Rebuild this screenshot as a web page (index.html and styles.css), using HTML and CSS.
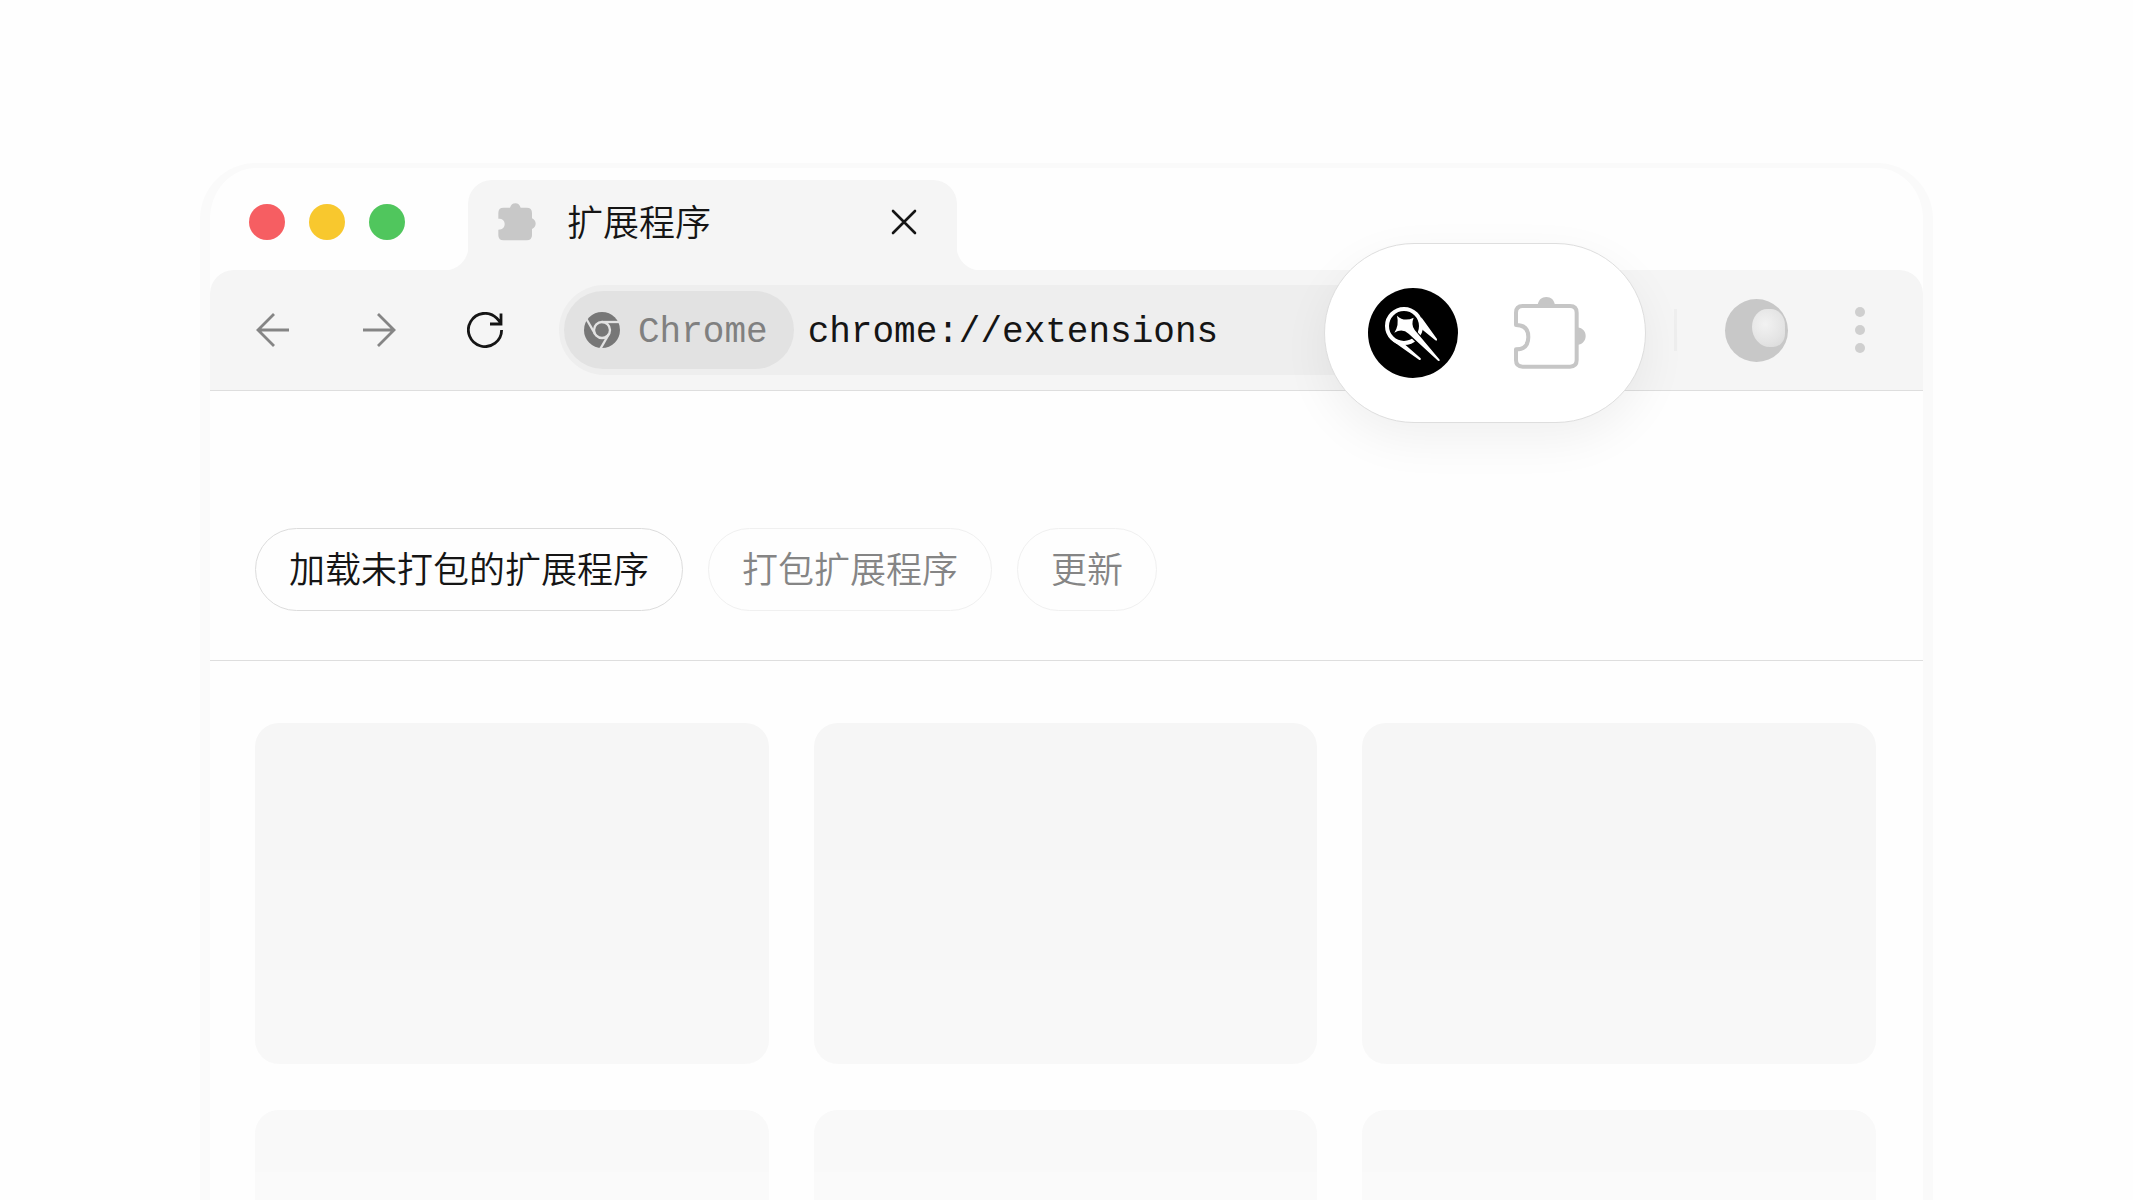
FILE: index.html
```html
<!DOCTYPE html>
<html lang="zh-CN">
<head>
  <meta charset="UTF-8" />
  <title>扩展程序</title>
  <meta name="viewport" content="width=device-width, initial-scale=1.0" />
  <link rel="stylesheet" href="styles.css">
</head>
<body>

  <div class="browser">
    <!-- Title bar -->
    <header class="titlebar">
      <div class="lights">
        <span class="light red"></span>
        <span class="light yellow"></span>
        <span class="light green"></span>
      </div>
      <div class="tab">
        <svg class="tab-icon" viewBox="0 0 114 112" aria-hidden="true">
          <path fill="#c8c8c8" d="M16 13H36C39 4 44 0 52 0S65 4 68 13H86Q102 13 102 29V45Q113 51 113 61T102 77V96Q102 111 86 111H16Q1 111 1 96V79C14 79 20 72 20 62S14 46 1 46V29Q1 13 16 13Z"/>
        </svg>
        <span class="tab-title">扩展程序</span>
        <button class="tab-close" aria-label="关闭">
          <svg viewBox="0 0 26 26" fill="none" stroke="#151515" stroke-width="2.6" stroke-linecap="round"><path d="M2 2L24 24M24 2L2 24"/></svg>
        </button>
      </div>
    </header>

    <!-- Toolbar -->
    <nav class="toolbar">
      <div class="nav-buttons">
        <button aria-label="后退">
          <svg viewBox="0 0 36 36" fill="none" stroke="#858585" stroke-width="2.8"><path d="M34 18H3M19 2L3 18L19 34"/></svg>
        </button>
        <button aria-label="前进">
          <svg viewBox="0 0 36 36" fill="none" stroke="#858585" stroke-width="2.8"><path d="M2 18H33M17 2L33 18L17 34"/></svg>
        </button>
        <button aria-label="重新加载">
          <svg viewBox="0 0 36 36" fill="none" stroke="#151515" stroke-width="2.8"><path d="M34.6 18A16.6 16.6 0 1 1 29.8 6.3L34 11M34 1.5V12H23"/></svg>
        </button>
      </div>

      <div class="address">
        <span class="chip">
          <svg viewBox="0 0 108 108" aria-hidden="true">
            <circle cx="54" cy="54" r="54" fill="#777"/>
            <g stroke="#e2e2e2" stroke-width="7" fill="none">
              <circle cx="54" cy="54" r="24"/>
              <path d="M54 30H106"/>
              <path d="M54 30H106" transform="rotate(120 54 54)"/>
              <path d="M54 30H106" transform="rotate(240 54 54)"/>
            </g>
          </svg>
          <span class="chip-label">Chrome</span>
        </span>
        <input type="text" value="chrome://extensions" aria-label="地址栏">
      </div>

      <span class="divider"></span>
      <button class="avatar" aria-label="个人资料"></button>
      <button class="menu" aria-label="菜单"><i></i><i></i><i></i></button>

      <!-- Enlarged extension buttons -->
      <div class="spotlight">
        <button class="comet" aria-label="扩展">
          <svg viewBox="0 0 270 270">
            <circle cx="135" cy="135" r="135" fill="#000"/>
            <circle cx="108" cy="114" r="51" fill="none" stroke="#fff" stroke-width="12"/>
            <path fill="#fff" d="M160 88L207 153Q208 160 202 157L156 119ZM66 151Q72 158 82 165L154 216Q161 217 158 211L110 169L92 160Z"/>
            <path fill="#000" d="M134 116L165 150L152 172L114 134Z"/>
            <path fill="#fff" d="M87 83Q108 103 137 89Q128 110 140 126L215 215Q216 221 210 218L122 137Q103 120 79 134Q94 111 87 83Z"/>
          </svg>
        </button>
        <button class="puzzle" aria-label="扩展程序">
          <svg viewBox="0 0 216 216">
            <path fill="none" stroke="#c6c6c6" stroke-width="12" stroke-linejoin="round" d="M6 84V47Q6 27 26 27H168Q188 27 188 47V189Q188 209 168 209H26Q6 209 6 189V157C30 157 43 145 43 120S30 84 6 84Z"/>
            <path fill="#c6c6c6" d="M71 25C73 8 83 0 97 0S121 8 123 25ZM190 91C207 93 215 104 215 117S207 142 190 144Z"/>
          </svg>
        </button>
      </div>
    </nav>

    <!-- Page -->
    <main>
      <div class="actions">
        <button class="primary">加载未打包的扩展程序</button>
        <button>打包扩展程序</button>
        <button>更新</button>
      </div>
      <div class="cards">
        <div class="card"></div>
        <div class="card"></div>
        <div class="card"></div>
        <div class="card"></div>
        <div class="card"></div>
        <div class="card"></div>
      </div>
    </main>
  </div>

</body>
</html>
```
FILE: styles.css
```css
* {
  box-sizing: border-box;
}

body {
  margin: 0;
  height: 100vh;
  padding: 163px 200px 0;
  overflow: hidden;
  background: #fefefe;
  color: #151515;
  font-family: "Noto Sans CJK SC", sans-serif;
  font-size: 36px;
  font-weight: 350;
}

button {
  padding: 0;
  border: 0;
  background: none;
  color: inherit;
  font: inherit;
  cursor: pointer;
}

svg {
  display: block;
}

.browser {
  border: 10px solid #fafafa;
  border-top-width: 5px;
  border-bottom: 0;
  border-radius: 56px 56px 0 0;
  background: #fefefe;
}

/* Title bar */
.titlebar {
  display: flex;
  align-items: flex-end;
  height: 102px;
  padding-left: 39px;
}

.lights {
  display: flex;
  gap: 24px;
  margin-right: 63px;
  padding-bottom: 30px;
}

.light {
  width: 36px;
  height: 36px;
  border-radius: 50%;
}

.red { background: #f65e62; }
.yellow { background: #f8c82e; }
.green { background: #50c65d; }

.tab {
  position: relative;
  display: flex;
  align-items: center;
  width: 489px;
  height: 90px;
  padding: 0 40px 6px 30px;
  border-radius: 24px 24px 0 0;
  background: #f5f5f5;
}

.tab::before,
.tab::after {
  content: "";
  position: absolute;
  bottom: 0;
  width: 24px;
  height: 24px;
}

.tab::before {
  right: 100%;
  background: radial-gradient(circle at 0 0, transparent 24px, #f5f5f5 25px);
}

.tab::after {
  left: 100%;
  background: radial-gradient(circle at 100% 0, transparent 24px, #f5f5f5 25px);
}

.tab-icon {
  width: 38px;
  height: 38px;
  margin-right: 31px;
}

.tab-title {
  flex: 1;
  padding-bottom: 5px;
  line-height: 48px;
}

.tab-close svg {
  width: 26px;
  height: 26px;
}

/* Toolbar */
.toolbar {
  position: relative;
  display: flex;
  align-items: center;
  height: 121px;
  padding: 0 58px 0 45px;
  border-bottom: 1px solid #dedede;
  border-radius: 24px 24px 0 0;
  background: #f5f5f5;
}

.nav-buttons {
  display: flex;
  gap: 70px;
  margin-right: 56px;
}

.nav-buttons svg {
  width: 36px;
  height: 36px;
}

.address {
  flex: 1;
  display: flex;
  align-items: center;
  height: 90px;
  margin-right: 80px;
  padding-left: 5px;
  border-radius: 45px;
  background: #eee;
  font-family: "Liberation Mono", monospace;
}

.chip {
  display: flex;
  align-items: center;
  gap: 18px;
  height: 78px;
  padding: 0 26px 0 20px;
  border-radius: 39px;
  background: #e2e2e2;
  color: #808080;
}

.chip svg {
  width: 36px;
  height: 36px;
}

.chip-label {
  padding-top: 4px;
}

.address input {
  flex: 1;
  min-width: 0;
  padding: 4px 0 0 14px;
  border: 0;
  outline: 0;
  background: none;
  color: #151515;
  font: inherit;
}

.divider {
  width: 3px;
  height: 42px;
  margin-right: 48px;
  background: #eee;
}

.avatar {
  position: relative;
  width: 63px;
  height: 63px;
  margin-right: 67px;
  border-radius: 50%;
  background: #c8c8c8;
}

.avatar::after {
  content: "";
  position: absolute;
  top: 10px;
  right: 3px;
  width: 33px;
  height: 38px;
  border-radius: 52% 48% 40% 60%;
  background: radial-gradient(circle at 40% 40%, #f2f2f2, #e4e4e4 60%, #d8d8d8);
}

.menu {
  display: flex;
  flex-direction: column;
  gap: 8px;
}

.menu i {
  width: 10px;
  height: 10px;
  border-radius: 50%;
  background: #cfcfcf;
}

.spotlight {
  position: absolute;
  top: -27px;
  right: 277px;
  display: flex;
  align-items: center;
  gap: 56px;
  height: 180px;
  padding: 0 59px 0 43px;
  border: 1px solid #dedede;
  border-radius: 90px;
  background: #fff;
  box-shadow: 0 16px 48px rgba(0, 0, 0, 0.06);
}

.comet svg {
  width: 90px;
  height: 90px;
}

.puzzle svg {
  width: 72px;
  height: 72px;
}

/* Page */
.actions {
  display: flex;
  gap: 25px;
  padding: 137px 45px 49px;
  border-bottom: 1px solid #dedede;
}

.actions button {
  height: 83px;
  padding: 0 33px 5px;
  border: 1px solid #f0f0f0;
  border-radius: 42px;
  color: #858585;
}

.actions .primary {
  border-color: #dcdcdc;
  color: #151515;
}

.cards {
  display: grid;
  grid-template-columns: 514fr 504fr 514fr;
  grid-auto-rows: 341px;
  gap: 46px 45px;
  padding: 62px 47px 0 45px;
  /* cards fade out towards the bottom */
  -webkit-mask-image: linear-gradient(#000 20%, rgba(0, 0, 0, 0.3));
  mask-image: linear-gradient(#000 20%, rgba(0, 0, 0, 0.3));
}

.card {
  border-radius: 24px;
  background: #f6f6f6;
}
```
